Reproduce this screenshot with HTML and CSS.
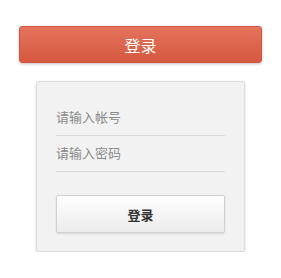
FILE: index.html
```html
<!DOCTYPE html>
<html lang="zh-CN">
<head>
    <meta charset="UTF-8">
    <title>登录</title>
    <link rel="stylesheet" href="styles.css">
</head>
<body>
    <div class="page">
        <button class="top_btn">登录</button>
        <form class="login_box">
            <input class="field" type="text" placeholder="请输入帐号">
            <input class="field" type="password" placeholder="请输入密码">
            <button class="login_btn" type="button">登录</button>
        </form>
    </div>
</body>
</html>
```

FILE: styles.css
```css
body {
    margin: 0;
    background: #fff;
    font-family: "Noto Sans CJK SC", "Liberation Sans", sans-serif;
}

.page {
    padding: 26px 0 0 19px;
    width: 243px;
}

.top_btn {
    display: block;
    width: 243px;
    height: 37px;
    border: 1px solid #d4553f;
    border-radius: 3px;
    background: linear-gradient(#e4745d, #d6573f);
    box-shadow: 0 1px 3px rgba(0, 0, 0, 0.25);
    color: #fff;
    font-family: inherit;
    font-size: 16px;
    padding: 0;
}

.login_box {
    margin: 18px 0 0 17px;
    width: 209px;
    box-sizing: border-box;
    padding: 18px 19px 18px 19px;
    background: #f2f2f2;
    border: 1px solid #dcdcdc;
    border-radius: 3px;
    box-shadow: 0 1px 3px rgba(0, 0, 0, 0.15);
    display: flex;
    flex-direction: column;
}

.field {
    box-sizing: border-box;
    height: 36px;
    border: none;
    border-bottom: 1px solid #d8d8d8;
    background: transparent;
    padding: 0 0 2px 0;
    font-family: inherit;
    font-size: 13px;
    color: #333;
    outline: none;
}

.field::placeholder {
    color: #8a8a8a;
}

.login_btn {
    margin-top: 23px;
    height: 38px;
    border: 1px solid #d0d0d0;
    border-radius: 2px;
    background: linear-gradient(#fefefe, #ececec);
    box-shadow: 0 1px 2px rgba(0, 0, 0, 0.12);
    font-family: inherit;
    font-size: 13px;
    font-weight: bold;
    color: #333;
}
```
